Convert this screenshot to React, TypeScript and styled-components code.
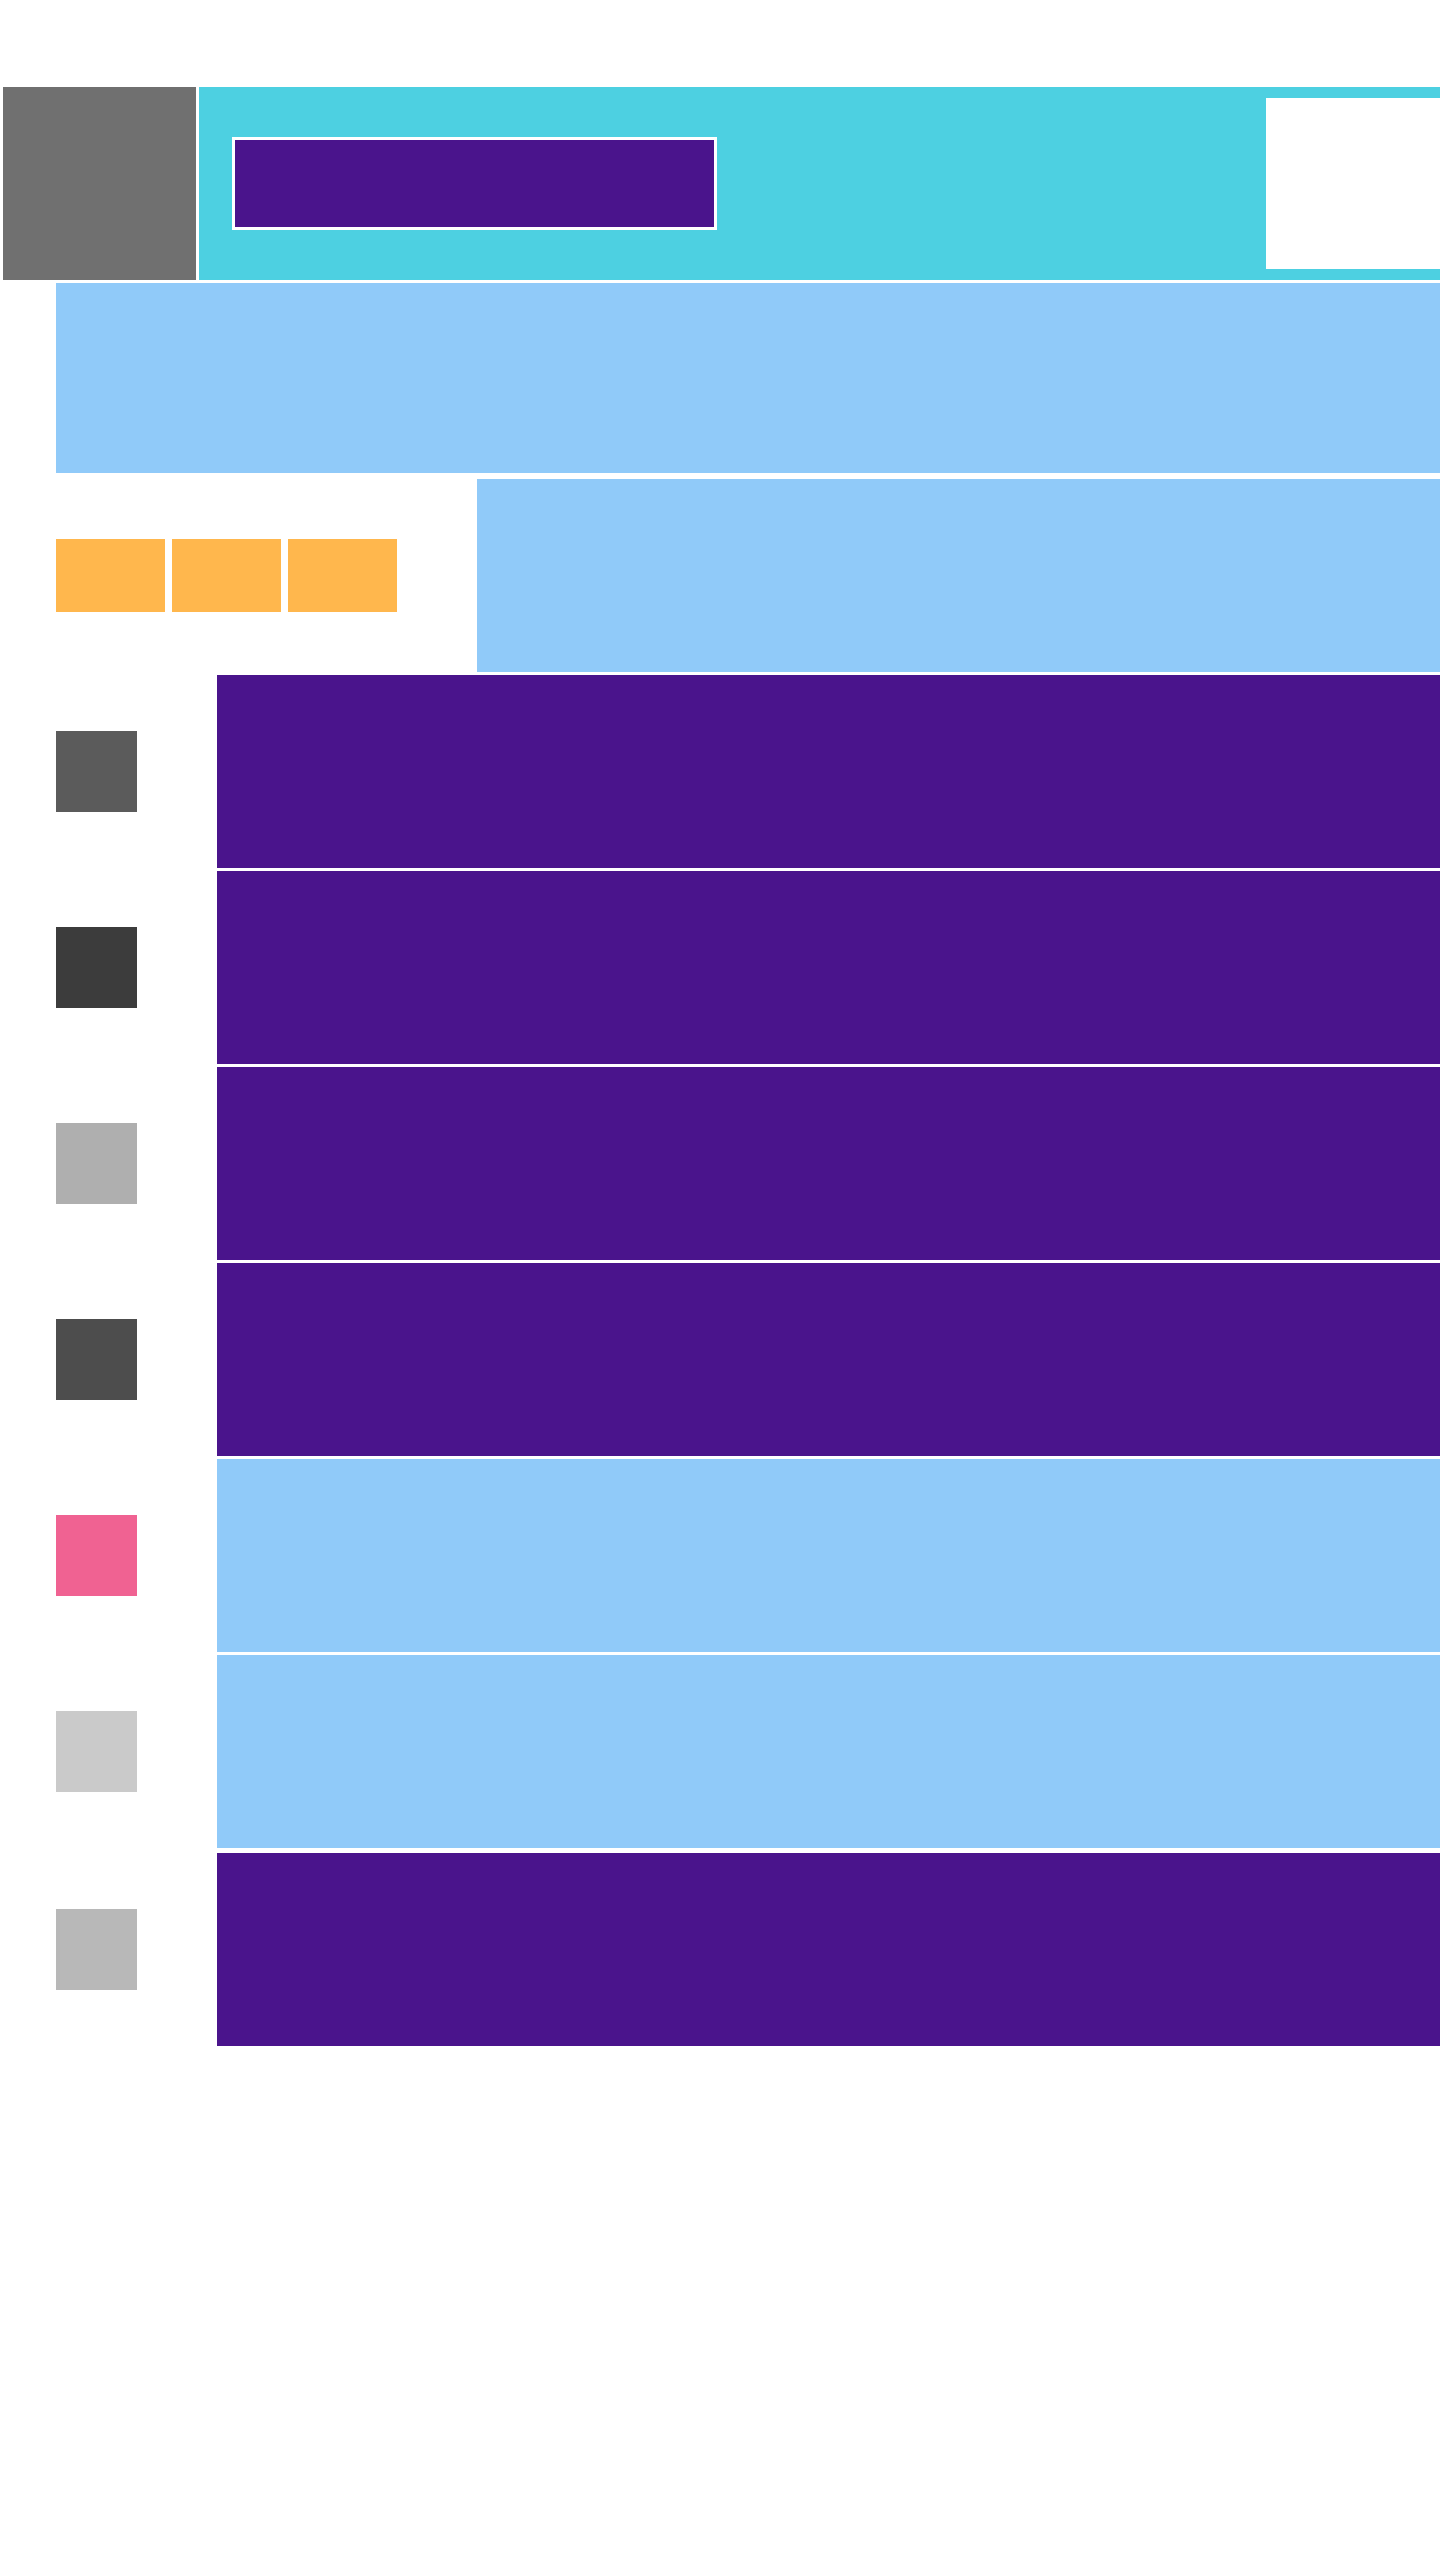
import React from "react";
import styled, { createGlobalStyle } from "styled-components";

const Global = createGlobalStyle`
  html, body { margin: 0; padding: 0; background: #ffffff; }
  body { font-family: "Liberation Sans", Arial, sans-serif; }
  * { box-sizing: border-box; }
`;

const Page = styled.div`
  width: 1440px;
  min-height: 2560px;
  padding-top: 87px;
  display: flex;
  flex-direction: column;
  overflow: hidden;
`;

const Header = styled.header`
  display: flex;
  gap: 3px;
  margin-left: 3px;
  height: 193px;
`;

const Logo = styled.div`
  width: 193px;
  flex-shrink: 0;
  background: #707070;
`;

const TopBar = styled.div`
  flex: 1;
  background: #4dd0e1;
  display: flex;
  align-items: center;
  padding-left: 33px;
`;

const SearchBox = styled.div`
  width: 485px;
  height: 93px;
  background: #4a148c;
  border: 3px solid #ffffff;
`;

const Avatar = styled.div`
  margin-left: auto;
  width: 174px;
  height: 171px;
  background: #ffffff;
`;

const Banner = styled.section`
  margin: 3px 0 0 56px;
  height: 190px;
  background: #90caf9;
`;

const ToolRow = styled.section`
  display: flex;
  margin: 6px 0 0 56px;
  height: 193px;
`;

const ToolGroup = styled.div`
  width: 421px;
  flex-shrink: 0;
  display: flex;
  align-items: center;
  gap: 7px;
`;

const ToolButton = styled.div`
  width: 109px;
  height: 73px;
  background: #ffb74d;
`;

const Panel = styled.div<{ $tone: "purple" | "blue" }>`
  flex: 1;
  background: ${(p) => (p.$tone === "purple" ? "#4a148c" : "#90caf9")};
`;

const List = styled.div<{ $top: number }>`
  display: flex;
  flex-direction: column;
  gap: 3px;
  margin: ${(p) => p.$top}px 0 0 56px;
`;

const Row = styled.div`
  display: flex;
  height: 193px;
`;

const IconCell = styled.div`
  width: 161px;
  flex-shrink: 0;
  display: flex;
  align-items: center;
`;

const Swatch = styled.div<{ $color: string }>`
  width: 81px;
  height: 81px;
  background: ${(p) => p.$color};
`;

type Item = { color: string; tone: "purple" | "blue" };

const rows: Item[] = [
  { color: "#5b5b5b", tone: "purple" },
  { color: "#3c3c3c", tone: "purple" },
  { color: "#afafaf", tone: "purple" },
  { color: "#4d4d4d", tone: "purple" },
  { color: "#f06292", tone: "blue" },
  { color: "#cacaca", tone: "blue" },
];

const extra: Item[] = [{ color: "#b8b8b8", tone: "purple" }];

function ItemRow({ item }: { item: Item }) {
  return (
    <Row>
      <IconCell>
        <Swatch $color={item.color} />
      </IconCell>
      <Panel $tone={item.tone} />
    </Row>
  );
}

export default function App() {
  return (
    <>
      <Global />
      <Page>
        <Header>
          <Logo />
          <TopBar>
            <SearchBox />
            <Avatar />
          </TopBar>
        </Header>
        <Banner />
        <ToolRow>
          <ToolGroup>
            <ToolButton />
            <ToolButton />
            <ToolButton />
          </ToolGroup>
          <Panel $tone="blue" />
        </ToolRow>
        <List $top={3}>
          {rows.map((r, i) => (
            <ItemRow key={i} item={r} />
          ))}
        </List>
        <List $top={5}>
          {extra.map((r, i) => (
            <ItemRow key={i} item={r} />
          ))}
        </List>
      </Page>
    </>
  );
}
